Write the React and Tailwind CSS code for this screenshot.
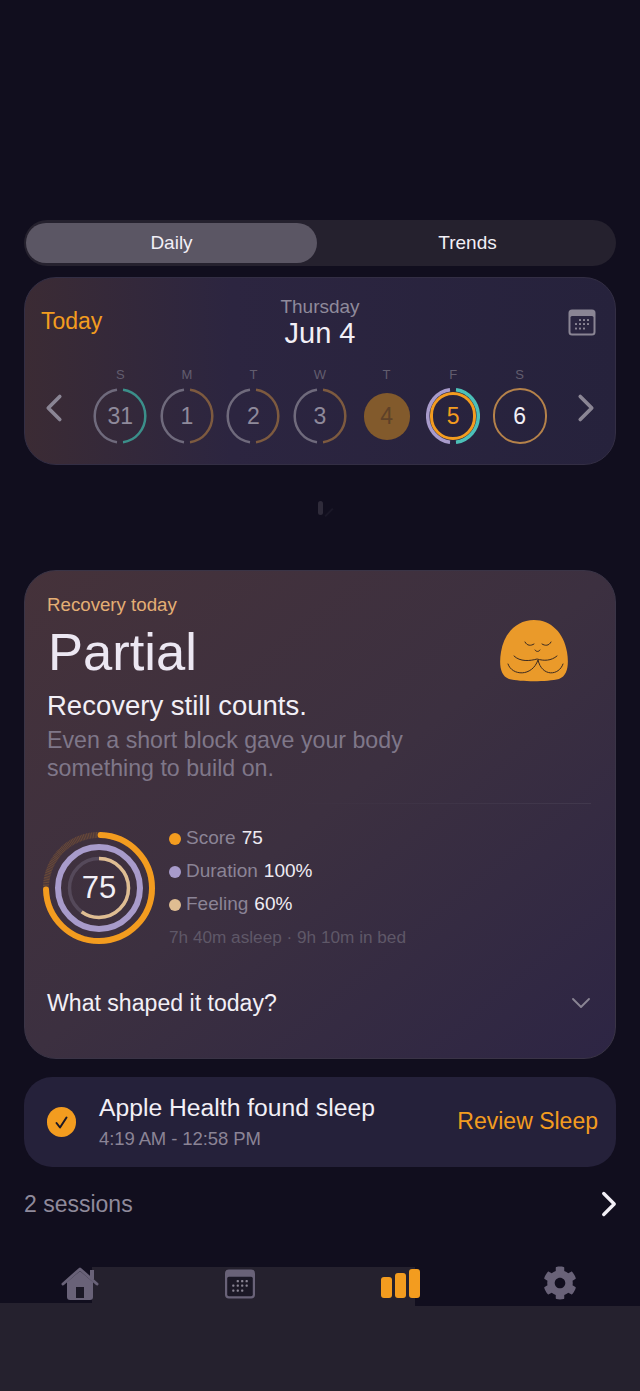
import React from 'react';
import { FaCog } from 'react-icons/fa';
import { ChevronDown, ChevronLeft, ChevronRight } from 'lucide-react';

const days = [
  { label: 'S', num: '31', right: '#3b8f8a' },
  { label: 'M', num: '1', right: '#7d5a3f' },
  { label: 'T', num: '2', right: '#7d5a3f' },
  { label: 'W', num: '3', right: '#7d5a3f' },
  { label: 'T', num: '4', today: true },
  { label: 'F', num: '5', selected: true },
  { label: 'S', num: '6', full: true },
];

// half ring, left and right arc with a small gap at top and bottom
const HalfRing = ({ left, right, width = 2.5, r = 25.5 }) => {
  const c = 27;
  const gap = 3;
  return (
    <svg className="absolute inset-0" width="54" height="56" viewBox="0 0 54 54" preserveAspectRatio="none">
      <path d={`M ${c - gap} ${c - r + 0.2} A ${r} ${r} 0 0 0 ${c - gap} ${c + r - 0.2}`} fill="none" stroke={left} strokeWidth={width} />
      <path d={`M ${c + gap} ${c - r + 0.2} A ${r} ${r} 0 0 1 ${c + gap} ${c + r - 0.2}`} fill="none" stroke={right} strokeWidth={width} />
    </svg>
  );
};

const DayCircle = ({ day }) => {
  if (day.today) {
    return (
      <div className="w-[54px] h-[56px] flex items-center justify-center">
        <div className="w-[46px] h-[47px] rounded-full bg-[#825a2c] flex items-center justify-center text-[23px] text-[#5e4128]">
          {day.num}
        </div>
      </div>
    );
  }
  if (day.selected) {
    return (
      <div className="relative w-[54px] h-[56px] flex items-center justify-center">
        <HalfRing left="#a89bcb" right="#4cc0b8" width={3.5} />
        <div className="w-[46px] h-[48px] rounded-full border-[3px] border-[#f39c1f] flex items-center justify-center text-[23px] text-[#f39c1f]">
          {day.num}
        </div>
      </div>
    );
  }
  if (day.full) {
    return (
      <div className="w-[54px] h-[56px] rounded-full border-[2.5px] border-[#b5824a] flex items-center justify-center text-[23px] text-[#f2eff6]">
        {day.num}
      </div>
    );
  }
  return (
    <div className="relative w-[54px] h-[56px] flex items-center justify-center text-[23px] text-[#8f8a9b]">
      <HalfRing left="#6f6a7c" right={day.right} />
      {day.num}
    </div>
  );
};

const CalendarIcon = ({ className, body, dots }) => (
  <svg className={className} viewBox="0 0 28 27" fill="none">
    <rect x="0.5" y="0.5" width="27" height="26" rx="3.5" fill={body} />
    <rect x="2.5" y="7" width="23" height="17.5" rx="1.5" fill={dots.bg} />
    {[
      [12, 11], [16, 11], [20, 11],
      [8, 15], [12, 15], [16, 15], [20, 15],
      [8, 19.5], [12, 19.5], [16, 19.5],
    ].map(([x, y]) => (
      <rect key={`${x}-${y}`} x={x - 1} y={y - 1} width="2" height="2" rx="0.6" fill={dots.fg} />
    ))}
  </svg>
);

const Legend = ({ color, label, value }) => (
  <div className="flex items-center h-[33px] text-[19px]">
    <span className="w-3 h-3 rounded-full mr-[5px]" style={{ backgroundColor: color }} />
    <span className="text-[#8b8496] mr-[6px]">{label}</span>
    <span className="text-[#efecf3]">{value}</span>
  </div>
);

const ScoreRing = () => (
  <div className="relative w-[112px] h-[112px] shrink-0 flex items-center justify-center">
    <svg className="absolute inset-0" width="112" height="112" viewBox="0 0 112 112" fill="none">
      <g transform="rotate(-90 56 56)">
        <circle cx="56" cy="56" r="53" stroke="#6a4a38" strokeWidth="6" strokeDasharray="1 0.6" />
        <circle cx="56" cy="56" r="53" stroke="#f39c1f" strokeWidth="6" strokeLinecap="round" pathLength="100" strokeDasharray="74 26" strokeDashoffset="-0.5" />
        <circle cx="56" cy="56" r="41" stroke="#a89bcb" strokeWidth="6" />
        <circle cx="56" cy="56" r="29.5" stroke="#55495a" strokeWidth="3.5" />
        <circle cx="56" cy="56" r="29.5" stroke="#dfbd92" strokeWidth="3.5" pathLength="100" strokeDasharray="60 40" />
      </g>
    </svg>
    <span className="relative text-[31px] text-[#f2eff6]">75</span>
  </div>
);

const BuddyIcon = () => (
  <svg className="w-[70px] h-[63px]" viewBox="0 0 70 63" fill="none">
    <path d="M35 1 C52 1 65 14 68 33 C70 45 69 57 60 60 C48 63 22 63 10 60 C1 57 0 45 2 33 C5 14 18 1 35 1 Z" fill="#ea9a2a" />
    <g stroke="#3a2a22" strokeWidth="1" strokeLinecap="round">
      <path d="M26 23 C28 27 32 27 35 25" />
      <path d="M43 25 C46 27 50 27 52 23" />
      <path d="M36 31 C37 33 40 33 41 31" />
      <path d="M15 37 C21 43 31 42 38 40 C45 42 52 42 58 37" />
      <path d="M9 45 C13 57 33 58 39 41 C43 58 60 57 64 45" />
    </g>
  </svg>
);

const App = () => {
  return (
    <div className="relative min-h-[1391px] bg-[#110e1e] pt-[220px] font-['Liberation_Sans',sans-serif] flex flex-col">
      {/* Daily / Trends switch */}
      <div className="mx-6 h-[46px] rounded-[23px] bg-[#25212e] py-[3px] pl-[2px] pr-[3px] flex text-[19px] text-[#f2eff6]">
        <div className="w-[291px] rounded-[20px] bg-[#5b5664] flex items-center justify-center pt-[1px]">Daily</div>
        <div className="flex-1 flex items-center justify-center pl-[5px] pt-[1px]">Trends</div>
      </div>

      {/* Week card */}
      <div className="mx-6 mt-[11px] h-[188px] rounded-[32px] border border-[#332e44] bg-gradient-to-r from-[#3b2b34] via-[#2c2540] via-35% to-[#26223c] pt-[17px] overflow-hidden">
        <div className="relative h-[60px] flex items-center justify-between pl-4 pr-[19px]">
          <span className="text-[23px] text-[#f39c1f] mt-[-8px]">Today</span>
          <div className="absolute left-0 right-0 top-0 flex flex-col items-center">
            <span className="text-[19px] leading-[23px] text-[#8f8a9b]">Thursday</span>
            <span className="text-[29px] leading-[31px] text-[#f2eff6]">Jun 4</span>
          </div>
          <CalendarIcon className="w-7 h-[27px] mt-[-6px]" body="#8a8594" dots={{ bg: '#2a2540', fg: '#8a8594' }} />
        </div>
        <div className="flex items-start mt-[12px]">
          <ChevronLeft className="ml-[6px] mt-[18px] shrink-0 text-[#8a8594]" size={46} strokeWidth={1.9} />
          <div className="ml-[10px] grid grid-cols-7 w-[466px]">
            {days.map((d, i) => (
              <div key={i} className="flex flex-col items-center">
                <span className="text-[13px] leading-[15px] text-[#625d6e] mb-[6px]">{d.label}</span>
                <DayCircle day={d} />
              </div>
            ))}
          </div>
          <ChevronRight className="ml-[10px] mt-[18px] shrink-0 text-[#8a8594]" size={46} strokeWidth={1.9} />
        </div>
      </div>

      {/* scroll mark */}
      <div className="h-[105px] flex items-center justify-center">
        <div className="relative w-[5px] h-[14px] rounded-full bg-[#2f2b3a] mt-[-20px]">
          <div className="absolute left-[10px] top-[6px] w-[2px] h-[11px] rotate-45 bg-[#1b1828]" />
        </div>
      </div>

      {/* Recovery card */}
      <div className="mx-6 h-[489px] rounded-[32px] border border-[#3a3446] bg-gradient-to-br from-[#45323a] via-[#3c3040] via-50% to-[#2d2544] pt-[23px] pl-[22px] pr-6 flex flex-col">
        <div className="text-[18.7px] leading-[22px] text-[#e4ae74]">Recovery today</div>
        <div className="flex justify-between items-start">
          <div>
            <div className="text-[52.5px] leading-[64px] text-[#ece7f2] pl-[1px] mt-[4px]">Partial</div>
            <div className="text-[27.5px] leading-[33px] text-[#f2eff6] mt-[5px]">Recovery still counts.</div>
            <div className="text-[23.2px] leading-[28px] text-[#7f7789] mt-[4px] w-[380px]">
              Even a short block gave your body something to build on.
            </div>
          </div>
          <div className="mr-[22px] mt-[3px]">
            <BuddyIcon />
          </div>
        </div>
        <div className="h-px mt-[21px] bg-gradient-to-r from-transparent from-45% to-[#4d4558] opacity-50" />
        <div className="flex mt-[28px] ml-[-4px]">
          <ScoreRing />
          <div className="ml-[14px] mt-[-10px]">
            <Legend color="#f39c1f" label="Score" value="75" />
            <Legend color="#a89bcb" label="Duration" value="100%" />
            <Legend color="#dfbd92" label="Feeling" value="60%" />
            <div className="text-[17.2px] leading-[32px] text-[#5f5868]">7h 40m asleep · 9h 10m in bed</div>
          </div>
        </div>
        <div className="flex items-center justify-between mt-[33px]">
          <span className="text-[23.1px] text-[#f2eff6]">What shaped it today?</span>
          <ChevronDown className="text-[#8a8594] mr-[-6px]" size={32} strokeWidth={1.4} />
        </div>
      </div>

      {/* Apple Health row */}
      <div className="mx-6 mt-[18px] h-[90px] rounded-[28px] bg-[#25213a] flex items-center pl-[23px] pr-[18px]">
        <div className="w-[29px] h-[30px] rounded-full bg-[#f39c1f] flex items-center justify-center shrink-0">
          <svg width="15" height="15" viewBox="0 0 15 15" fill="none">
            <path d="M2.5 8 L6 12.5 L12.5 2.5" stroke="#1b1726" strokeWidth="2" strokeLinecap="round" strokeLinejoin="round" />
          </svg>
        </div>
        <div className="ml-[23px] flex-1 mt-[-2px]">
          <div className="text-[24.7px] leading-[32px] text-[#f2eff6]">Apple Health found sleep</div>
          <div className="text-[18.5px] leading-[24px] text-[#8b8496] tracking-[-0.1px] mt-[3px]">4:19 AM - 12:58 PM</div>
        </div>
        <span className="text-[23px] text-[#f39c1f] mt-[-2px]">Review Sleep</span>
      </div>

      {/* Sessions row */}
      <div className="mx-6 mt-[20px] h-[34px] flex items-center justify-between">
        <span className="text-[23px] text-[#8f8a9b]">2 sessions</span>
        <ChevronRight className="text-[#f2eff6] mr-[-14px]" size={42} strokeWidth={1.9} />
      </div>

      {/* Tab bar */}
      <div className="relative mt-[44px] h-[38px] grid grid-cols-4 items-start">
        <div className="absolute left-[92px] w-[323px] top-[2px] bottom-0 bg-[#25212e]" />
        <div className="relative flex justify-center pt-[2px]">
          <svg width="38" height="34" viewBox="0 0 38 34" fill="none">
            <path d="M2 17 L19 2 L36 17" stroke="#696278" strokeWidth="3" strokeLinecap="round" strokeLinejoin="round" />
            <rect x="29" y="3" width="4" height="9" fill="#696278" />
            <path d="M6 15 L19 4 L32 15 V30 C32 32 31 33 29 33 H9 C7 33 6 32 6 30 Z" fill="#696278" />
            <rect x="15" y="20" width="8" height="11" fill="#1b1826" />
          </svg>
        </div>
        <div className="relative flex justify-center pt-[4px]">
          <CalendarIcon className="w-8 h-[30px]" body="#696278" dots={{ bg: '#1b1826', fg: '#8a8594' }} />
        </div>
        <div className="relative flex justify-center gap-[3px] items-end h-[33px]">
          <span className="w-[11px] h-[21px] rounded-[3px] bg-[#f39c1f]" />
          <span className="w-[11px] h-[25px] rounded-[3px] bg-[#f39c1f]" />
          <span className="w-[11px] h-[29px] rounded-[3px] bg-[#f39c1f]" />
        </div>
        <div className="relative flex justify-center pt-[1px]">
          <FaCog className="text-[#696278]" size={34} />
        </div>
      </div>

      {/* Bottom band */}
      <div className="relative flex-1 h-[88px] bg-[#25212e]">
        <div className="absolute top-0 right-0 left-[415px] h-[3px] bg-[#110e1e]" />
      </div>
    </div>
  );
};

export default App;
